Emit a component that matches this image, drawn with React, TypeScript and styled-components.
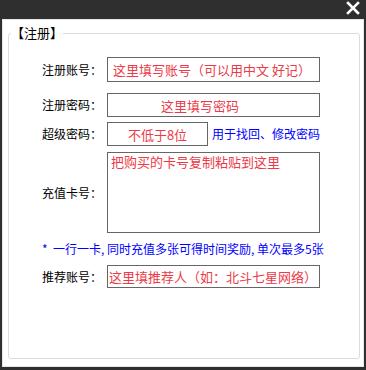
import { createGlobalStyle } from "styled-components";
import styled from "styled-components";

const GlobalStyle = createGlobalStyle`
  html, body {
    margin: 0;
    padding: 0;
    background: #2f2f2f;
  }
`;

const cjk = `"Noto Sans CJK SC", "Noto Sans", sans-serif`;

const Window = styled.div`
  width: 366px;
  height: 370px;
  background: #2f2f2f;
  display: flex;
  flex-direction: column;
  font-family: ${cjk};
`;

const TitleBar = styled.div`
  height: 19px;
  display: flex;
  justify-content: flex-end;
  align-items: flex-start;
  padding: 1px 6px 0 0;
  box-sizing: border-box;
`;

const CloseBtn = styled.button`
  width: 14px;
  height: 14px;
  padding: 0;
  border: none;
  background: none;
  display: flex;
  cursor: pointer;
`;

const Panel = styled.div`
  flex: 1;
  margin: 0 2px 3px 2px;
  background: #fff;
  padding: 7px 4px 8px 6px;
  display: flex;
  flex-direction: column;
  box-shadow: inset 0 0 0 1px #e4e8ea;
`;

const Group = styled.fieldset`
  flex: 1;
  margin: 0;
  padding: 0;
  min-width: 0;
  border: 1px solid #d3dde2;
  border-radius: 3px;
`;

const Legend = styled.legend`
  margin-left: 2px;
  padding: 0;
  font-size: 13px;
  line-height: 14px;
  color: #000;
`;

const Form = styled.div`
  padding: 17px 0 0 33px;
  display: flex;
  flex-direction: column;
`;

const Row = styled.div<{ $top: number }>`
  display: flex;
  align-items: center;
  margin-top: ${(p) => p.$top}px;
`;

const Label = styled.label`
  width: 65px;
  flex-shrink: 0;
  font-size: 12px;
  line-height: 14px;
  color: #000;
`;

const Field = styled.input<{ $w?: number; $h: number; $align?: string; $pad?: number }>`
  box-sizing: border-box;
  width: ${(p) => p.$w ?? 213}px;
  height: ${(p) => p.$h}px;
  border: 1px solid #666;
  padding: 0 0 0 ${(p) => p.$pad ?? 4}px;
  margin: 0;
  font-family: ${cjk};
  font-size: 13px;
  text-align: ${(p) => p.$align ?? "left"};
  outline: none;
  &::placeholder {
    color: #ec3a48;
    opacity: 1;
  }
`;

const Area = styled.textarea`
  box-sizing: border-box;
  width: 213px;
  height: 81px;
  border: 1px solid #666;
  padding: 1px 3px;
  margin: 0;
  resize: none;
  font-family: ${cjk};
  font-size: 13px;
  line-height: 16px;
  outline: none;
  &::placeholder {
    color: #ec3a48;
    opacity: 1;
  }
`;

const Hint = styled.span`
  margin-left: 4px;
  font-size: 12px;
  line-height: 14px;
  color: #0000ff;
  white-space: nowrap;
`;

const Note = styled.div`
  margin-top: 9px;
  font-size: 12px;
  line-height: 14px;
  color: #0000ff;
  white-space: nowrap;
`;

export default function App() {
  return (
    <>
      <GlobalStyle />
      <Window>
        <TitleBar>
          <CloseBtn aria-label="关闭">
            <svg width="14" height="14" viewBox="0 0 14 14">
              <path d="M2 2 L12 12 M12 2 L2 12" stroke="#fff" strokeWidth="2.6" strokeLinecap="square" />
            </svg>
          </CloseBtn>
        </TitleBar>
        <Panel>
          <Group>
            <Legend>【注册】</Legend>
            <Form>
              <Row $top={0}>
                <Label>注册账号：</Label>
                <Field $h={25} $pad={5} placeholder="这里填写账号（可以用中文 好记）" />
              </Row>
              <Row $top={11}>
                <Label>注册密码：</Label>
                <Field $h={24} $pad={53} placeholder="这里填写密码" />
              </Row>
              <Row $top={5}>
                <Label>超级密码：</Label>
                <Field $w={101} $h={24} $align="center" $pad={0} placeholder="不低于8位" />
                <Hint>用于找回、修改密码</Hint>
              </Row>
              <Row $top={6}>
                <Label>充值卡号：</Label>
                <Area placeholder="把购买的卡号复制粘贴到这里" />
              </Row>
              <Note>* &nbsp;一行一卡, 同时充值多张可得时间奖励, 单次最多5张</Note>
              <Row $top={9}>
                <Label>推荐账号：</Label>
                <Field $h={23} $pad={1} placeholder="这里填推荐人（如：北斗七星网络）" />
              </Row>
            </Form>
          </Group>
        </Panel>
      </Window>
    </>
  );
}
